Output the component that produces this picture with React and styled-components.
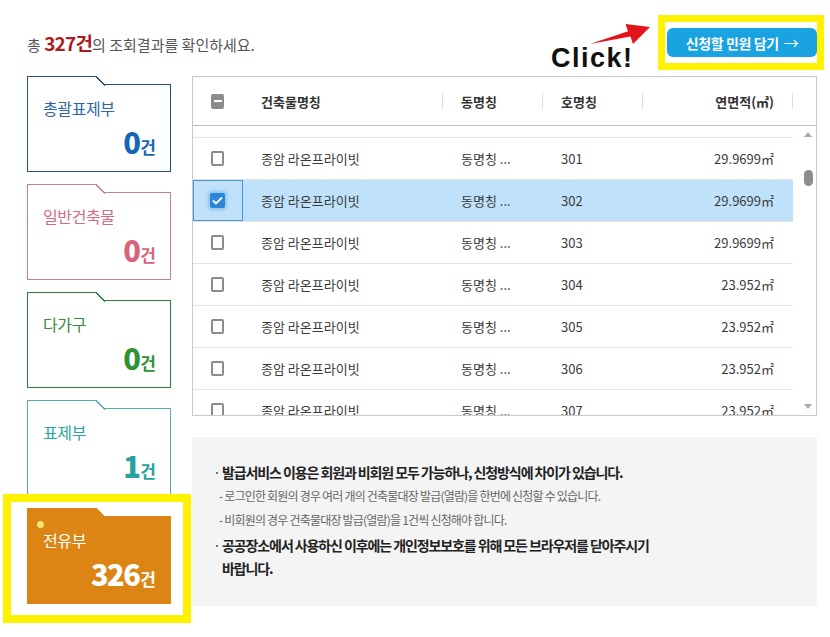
import styled, { createGlobalStyle } from "styled-components";

const GlobalStyle = createGlobalStyle`
  html, body {
    margin: 0;
    padding: 0;
    background: #fff;
  }
  body {
    font-family: "Noto Sans CJK KR", "Noto Sans", sans-serif;
    color: #333;
  }
  * {
    box-sizing: border-box;
  }
`;

const Page = styled.div`
  position: relative;
  width: 830px;
  height: 637px;
  overflow: hidden;
`;

const TopBar = styled.header`
  display: flex;
  align-items: center;
  justify-content: space-between;
  padding: 15px 6px 6px 27px;
`;

const Summary = styled.p`
  margin: 0;
  font-size: 15px;
  color: #555;

  & > b {
    font-size: 19px;
    font-weight: 700;
    color: #ac1b22;
    letter-spacing: -0.8px;
  }
`;

const ActionArea = styled.div`
  position: relative;
`;

const Highlight = styled.div`
  border: 7px solid #fdf300;
  padding: 6px 0 6px 2px;
`;

const CartButton = styled.button`
  display: flex;
  align-items: center;
  justify-content: center;
  gap: 5px;
  width: 150px;
  height: 29px;
  border: 0;
  border-radius: 6px;
  background: #19a3e1;
  color: #fff;
  font-family: "Noto Sans CJK KR", sans-serif;
  font-size: 14px;
  font-weight: 700;
  letter-spacing: -0.4px;

  & > span {
    font-weight: 400;
    font-size: 15px;
  }
`;

const ClickNote = styled.span`
  position: absolute;
  left: -107px;
  top: 30px;
  font-family: "Liberation Sans", Arial, sans-serif;
  font-size: 27px;
  font-weight: 700;
  line-height: 1;
  letter-spacing: 1.5px;
  color: #111;
`;

const Arrow = styled.svg`
  position: absolute;
  left: -70px;
  top: 8px;
`;

const Content = styled.div`
  display: flex;
  gap: 21px;
  padding: 0 13px 0 27px;
`;

const CardList = styled.ul`
  list-style: none;
  margin: 0;
  padding: 0;
  width: 144px;
  display: flex;
  flex-direction: column;
  gap: 12px;
`;

const tones = {
  blue: { line: "#224f80", title: "#2c66a8", count: "#1767b6", fill: "#fff" },
  rose: { line: "#c97e8f", title: "#d36b82", count: "#d9637b", fill: "#fff" },
  green: { line: "#2f7f3b", title: "#378a3d", count: "#2c9436", fill: "#fff" },
  teal: { line: "#55aeae", title: "#2ea2a2", count: "#26a19e", fill: "#fff" },
  orange: { line: "#dc8514", title: "#fff", count: "#fff", fill: "#dc8514" },
};

const Card = styled.li`
  position: relative;
  margin-top: 8px;
  height: 88px;
  padding: 12px 14px 15px 15px;
  display: flex;
  flex-direction: column;
  justify-content: space-between;
  border: 1px solid ${(p) => p.$tone.line};
  background: ${(p) => p.$tone.fill};

  &::before {
    content: "";
    position: absolute;
    top: -9px;
    left: -1px;
    width: 69px;
    height: 10px;
    border-top: 1px solid ${(p) => p.$tone.line};
    border-left: 1px solid ${(p) => p.$tone.line};
    background: ${(p) => p.$tone.fill};
  }

  &::after {
    content: "";
    position: absolute;
    top: -9px;
    left: 68px;
    width: 9px;
    height: 10px;
    background: linear-gradient(
      to top right,
      ${(p) => p.$tone.fill} calc(50% - 0.7px),
      ${(p) => p.$tone.line} calc(50% - 0.7px),
      ${(p) => p.$tone.line} calc(50% + 0.7px),
      transparent calc(50% + 0.7px)
    );
  }
`;

const CardDot = styled.i`
  position: absolute;
  top: 4px;
  left: 9px;
  width: 7px;
  height: 7px;
  border-radius: 50%;
  background: #fbe46c;
`;

const CardTitle = styled.p`
  margin: 0;
  font-size: 16px;
  line-height: 22px;
  letter-spacing: -0.4px;
  color: ${(p) => p.$tone.title};
`;

const CardCount = styled.p`
  margin: 0;
  text-align: right;
  line-height: 1;
  font-weight: 700;
  color: ${(p) => p.$tone.count};

  & > strong {
    font-size: 29px;
    letter-spacing: -1.5px;
  }
  & > span {
    font-size: 17px;
    margin-left: 1px;
  }
`;

const Main = styled.div`
  flex: 1;
  display: flex;
  flex-direction: column;
  gap: 21px;
`;

const Table = styled.div`
  height: 340px;
  border: 1px solid #c9c9c9;
  display: flex;
  flex-direction: column;
  background: #fff;
`;

const columns = "50px 200px 100px 100px 150px";

const HeadRow = styled.div`
  display: grid;
  grid-template-columns: ${columns};
  height: 49px;
  flex: none;
  align-items: center;
  border-bottom: 1px solid #bdbdbd;
  font-size: 13px;
  font-weight: 700;
  color: #333;
`;

const HeadCell = styled.div`
  position: relative;
  display: flex;
  align-items: center;
  justify-content: ${(p) => (p.$end ? "flex-end" : p.$center ? "center" : "flex-start")};
  padding: 0 19px 0 18px;
  height: 100%;

  &::after {
    content: "";
    display: ${(p) => (p.$sep ? "block" : "none")};
    position: absolute;
    right: 0;
    top: 16px;
    width: 1px;
    height: 16px;
    background: #dedede;
  }
`;

const BodyArea = styled.div`
  flex: 1;
  min-height: 0;
  display: flex;
  gap: 7px;
  overflow: hidden;
`;

const Rows = styled.ul`
  width: 600px;
  margin: 0;
  padding: 11px 0 0;
  list-style: none;

  & > li:first-child {
    border-top: 1px solid #e3e3e3;
    height: 43px;
  }
`;

const Row = styled.li`
  display: grid;
  grid-template-columns: ${columns};
  height: 42px;
  flex: none;
  border-bottom: 1px solid #e3e3e3;
  font-size: 13px;
  color: #3a3a3a;
  background: ${(p) => (p.$selected ? "#bfe1f9" : "#fff")};
`;

const Cell = styled.div`
  display: flex;
  align-items: center;
  justify-content: ${(p) => (p.$end ? "flex-end" : p.$center ? "center" : "flex-start")};
  padding: 0 19px 0 18px;
  white-space: nowrap;
  overflow: hidden;
  border: ${(p) => (p.$focus ? "1px solid #4a93d4" : "0")};
`;

const Box = styled.span`
  position: relative;
  display: inline-flex;
  align-items: center;
  justify-content: center;
  width: 15px;
  height: 15px;
  border-radius: 2px;
  border: 2px solid ${(p) => (p.$state === "on" ? "#2c87d8" : "#8c8c8c")};
  background: ${(p) => (p.$state === "on" ? "#2c87d8" : p.$state === "mixed" ? "#8c8c8c" : "#fff")};
  box-shadow: ${(p) => (p.$state === "on" ? "0 0 3px 2px rgba(90, 165, 235, 0.45)" : "none")};

  &::after {
    content: "";
    display: ${(p) => (p.$state === "mixed" ? "block" : "none")};
    width: 8px;
    height: 2px;
    background: #fff;
  }
`;

const ScrollBar = styled.div`
  width: 16px;
  display: flex;
  flex-direction: column;
  align-items: center;
  padding: 6px 0 6px;
`;

const ScrollArrow = styled.span`
  width: 0;
  height: 0;
  border-left: 4px solid transparent;
  border-right: 4px solid transparent;
  ${(p) => (p.$down ? "border-top: 5px solid #a8a8a8;" : "border-bottom: 5px solid #a8a8a8;")}
`;

const ScrollTrack = styled.div`
  flex: 1;
  width: 100%;
  display: flex;
  justify-content: center;
  padding-top: 33px;
`;

const Thumb = styled.span`
  width: 9px;
  height: 16px;
  border-radius: 5px;
  background: #8d8d8d;
`;

const Notice = styled.div`
  height: 169px;
  background: #f4f4f4;
  padding: 24px 20px 0 30px;
`;

const NoticeList = styled.ul`
  list-style: none;
  margin: 0;
  padding: 0;
  max-width: 430px;
  word-break: keep-all;
`;

const Lead = styled.li`
  position: relative;
  font-size: 14px;
  font-weight: 700;
  line-height: 23px;
  letter-spacing: -1.1px;
  color: #222;
  margin-top: ${(p) => (p.$gap ? "2px" : "0")};

  &::before {
    content: "·";
    position: absolute;
    left: -9px;
    top: 0;
    font-weight: 400;
    color: #555;
  }
`;

const Sub = styled.li`
  font-size: 12px;
  line-height: 24px;
  letter-spacing: -0.8px;
  color: #666;
  margin-left: -3px;
`;

const FocusMark = styled.div`
  position: absolute;
  left: 3px;
  top: 494px;
  width: 188px;
  height: 129px;
  border: 8px solid #fdf300;
  pointer-events: none;
`;

const categories = [
  { name: "총괄표제부", count: 0, tone: "blue" },
  { name: "일반건축물", count: 0, tone: "rose" },
  { name: "다가구", count: 0, tone: "green" },
  { name: "표제부", count: 1, tone: "teal" },
  { name: "전유부", count: 326, tone: "orange", active: true },
];

const units = [
  { ho: "301", area: "29.9699㎡" },
  { ho: "302", area: "29.9699㎡", checked: true },
  { ho: "303", area: "29.9699㎡" },
  { ho: "304", area: "23.952㎡" },
  { ho: "305", area: "23.952㎡" },
  { ho: "306", area: "23.952㎡" },
  { ho: "307", area: "23.952㎡" },
];

const Check = ({ state }) => (
  <Box $state={state}>
    {state === "on" && (
      <svg width="11" height="9" viewBox="0 0 11 9">
        <polyline points="1,4.5 4,7.5 10,1.5" fill="none" stroke="#fff" strokeWidth="1.8" />
      </svg>
    )}
  </Box>
);

export default function App() {
  return (
    <Page>
      <GlobalStyle />
      <TopBar>
        <Summary>
          총 <b>327건</b>의 조회결과를 확인하세요.
        </Summary>
        <ActionArea>
          <Arrow width="66" height="28" viewBox="0 0 66 28">
            <polygon points="2,21 40,8.2 37.5,1 62,4 45,21 42.5,13.6" fill="#e3151a" />
          </Arrow>
          <ClickNote>Click!</ClickNote>
          <Highlight>
            <CartButton type="button">
              신청할 민원 담기<span>→</span>
            </CartButton>
          </Highlight>
        </ActionArea>
      </TopBar>

      <Content>
        <CardList>
          {categories.map((c) => (
            <Card key={c.name} $tone={tones[c.tone]}>
              {c.active && <CardDot />}
              <CardTitle $tone={tones[c.tone]}>{c.name}</CardTitle>
              <CardCount $tone={tones[c.tone]}>
                <strong>{c.count}</strong>
                <span>건</span>
              </CardCount>
            </Card>
          ))}
        </CardList>

        <Main>
          <Table>
            <HeadRow>
              <HeadCell $center>
                <Check state="mixed" />
              </HeadCell>
              <HeadCell $sep>건축물명칭</HeadCell>
              <HeadCell $sep>동명칭</HeadCell>
              <HeadCell $sep>호명칭</HeadCell>
              <HeadCell $sep $end>
                연면적(㎡)
              </HeadCell>
            </HeadRow>
            <BodyArea>
              <Rows>
                {units.map((u) => (
                  <Row key={u.ho} $selected={u.checked}>
                    <Cell $center $focus={u.checked}>
                      <Check state={u.checked ? "on" : "off"} />
                    </Cell>
                    <Cell>종암 라온프라이빗</Cell>
                    <Cell>동명칭 ...</Cell>
                    <Cell>{u.ho}</Cell>
                    <Cell $end>{u.area}</Cell>
                  </Row>
                ))}
              </Rows>
              <ScrollBar>
                <ScrollArrow />
                <ScrollTrack>
                  <Thumb />
                </ScrollTrack>
                <ScrollArrow $down />
              </ScrollBar>
            </BodyArea>
          </Table>

          <Notice>
            <NoticeList>
              <Lead>발급서비스 이용은 회원과 비회원 모두 가능하나, 신청방식에 차이가 있습니다.</Lead>
              <Sub>- 로그인한 회원의 경우 여러 개의 건축물대장 발급(열람)을 한번에 신청할 수 있습니다.</Sub>
              <Sub>- 비회원의 경우 건축물대장 발급(열람)을 1건씩 신청해야 합니다.</Sub>
              <Lead $gap>공공장소에서 사용하신 이후에는 개인정보보호를 위해 모든 브라우저를 닫아주시기 바랍니다.</Lead>
            </NoticeList>
          </Notice>
        </Main>
      </Content>

      <FocusMark />
    </Page>
  );
}
